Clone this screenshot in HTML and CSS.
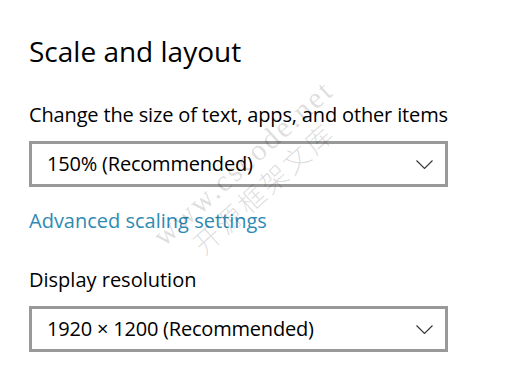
FILE: index.html
```html
<!DOCTYPE html>
<html lang="en">
<head>
    <meta charset="UTF-8">
    <meta name="viewport" content="width=device-width, initial-scale=1.0">
    <title>Scale and layout</title>
    <link rel="stylesheet" href="styles.css">
</head>
<body>
    <div class="page">
        <h1>Scale and layout</h1>

        <div class="label">Change the size of text, apps, and other items</div>
        <div class="dropdown">
            <span>150% (Recommended)</span>
            <svg class="chevron" width="17" height="9" viewBox="0 0 17 9">
                <path d="M0.5 0.5 L8.5 8.5 L16.5 0.5" fill="none" stroke="#333" stroke-width="1.1"/>
            </svg>
        </div>

        <a class="link" href="#">Advanced scaling settings</a>

        <div class="label second">Display resolution</div>
        <div class="dropdown">
            <span>1920 × 1200 (Recommended)</span>
            <svg class="chevron" width="17" height="9" viewBox="0 0 17 9">
                <path d="M0.5 0.5 L8.5 8.5 L16.5 0.5" fill="none" stroke="#333" stroke-width="1.1"/>
            </svg>
        </div>

        <!-- watermark on the screenshot -->
        <div class="watermark">
            <div>www.cscode.net</div>
            <div class="cn">开源框架文库</div>
        </div>
    </div>
</body>
</html>
```

FILE: styles.css
```css
body {
    margin: 0;
    background: #fff;
    font-family: "Open Sans", "Noto Sans", sans-serif;
    color: #000;
}
.page {
    position: relative;
    padding: 33px 0 0 29px;
    width: 419px;
}
h1 {
    margin: 0;
    font-size: 28px;
    font-weight: 400;
    line-height: 36px;
}
.label {
    margin-top: 32px;
    font-size: 20px;
    line-height: 28px;
    letter-spacing: -0.15px;
    white-space: nowrap;
}
.label.second {
    margin-top: 31px;
    letter-spacing: 0;
}
.dropdown {
    margin-top: 12px;
    height: 40px;
    border: 3px solid #999;
    display: flex;
    align-items: center;
    justify-content: space-between;
    padding: 0 12px 0 15px;
    font-size: 20px;
    line-height: 40px;
    letter-spacing: -0.2px;
}
.chevron {
    display: block;
}
.link {
    display: block;
    margin-top: 20px;
    font-size: 20px;
    line-height: 28px;
    color: #2f8ab3;
    text-decoration: none;
}
.watermark {
    position: absolute;
    left: 168px;
    top: 220px;
    transform: rotate(-42deg);
    transform-origin: 0 32px;
    color: rgba(0, 0, 0, 0.14);
    font-family: "Liberation Serif", serif;
    font-size: 30px;
    line-height: 32px;
    letter-spacing: 2.5px;
    white-space: nowrap;
}
.watermark .cn {
    padding-left: 24px;
    font-family: "Noto Sans CJK SC", sans-serif;
    font-size: 27px;
    font-weight: 300;
    letter-spacing: 3px;
}
```
